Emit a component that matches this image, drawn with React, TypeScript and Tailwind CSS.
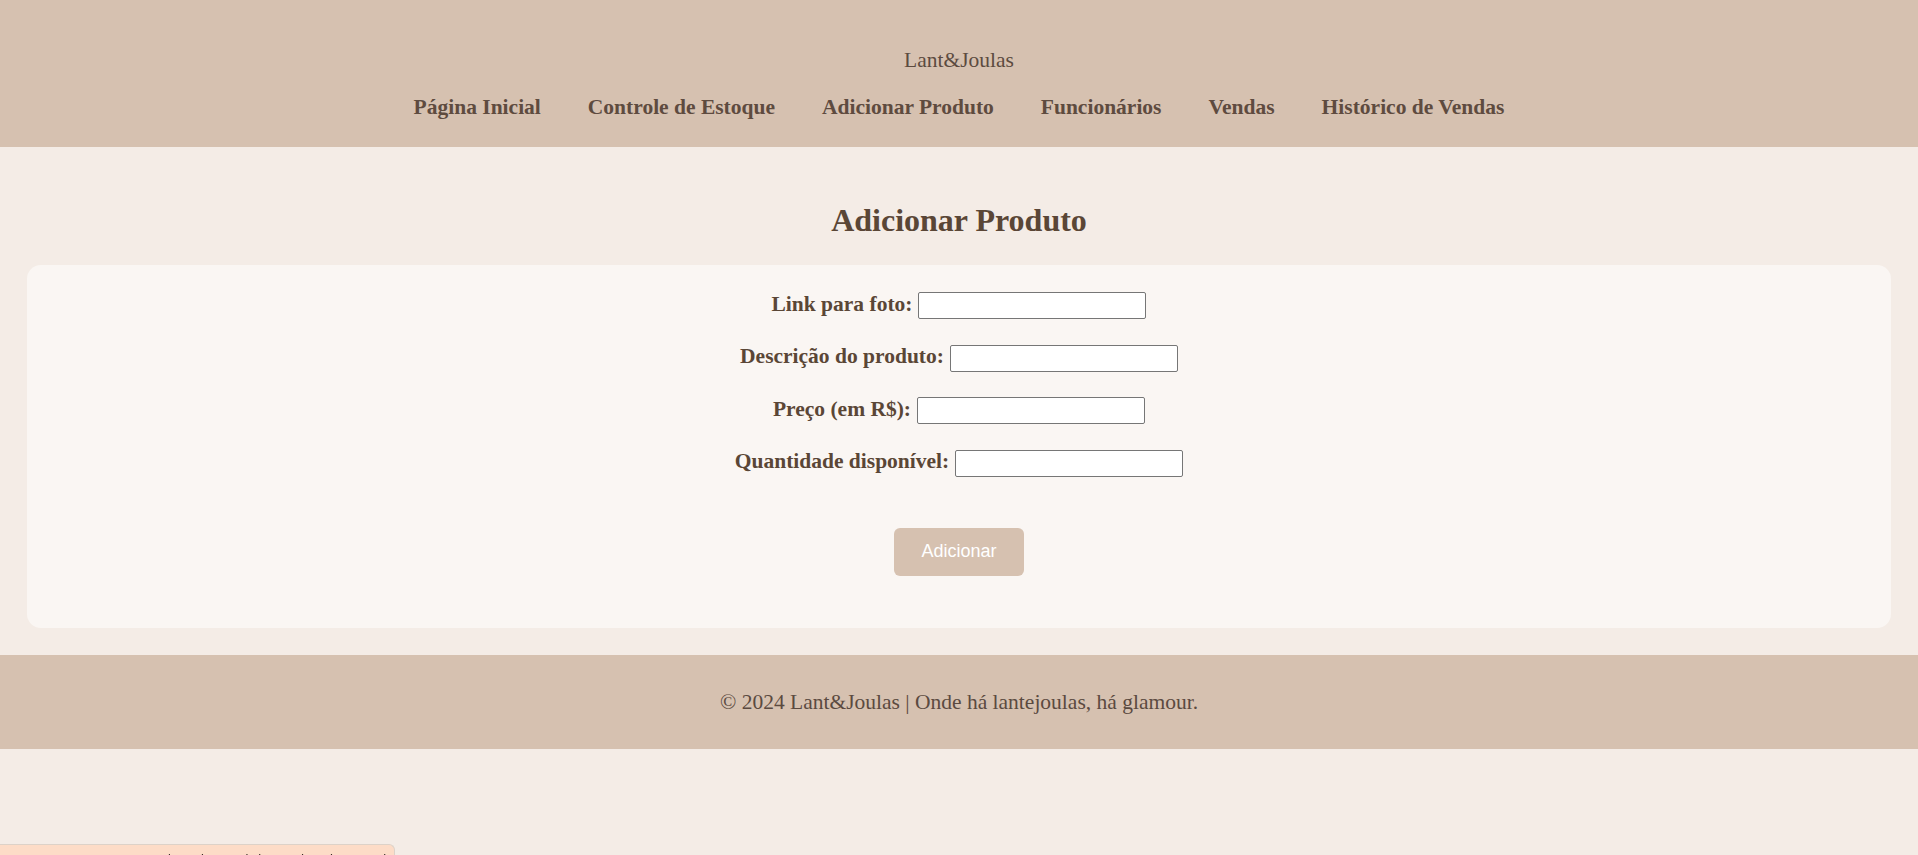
import React from "react";

const navItems = [
  "Página Inicial",
  "Controle de Estoque",
  "Adicionar Produto",
  "Funcionários",
  "Vendas",
  "Histórico de Vendas",
];

const fields = [
  "Link para foto:",
  "Descrição do produto:",
  "Preço (em R$):",
  "Quantidade disponível:",
];

export default function App() {
  return (
    <div className="min-h-[855px] bg-[#f4ece6] font-['Liberation_Serif',serif] text-[#5a4636]">
      <header className="bg-[#d6c1b0] pt-[48px] pb-[27px]">
        <div className="text-center text-[21.5px] leading-[25px] text-[#5c4b40]">Lant&amp;Joulas</div>
        <nav className="mt-[22px] flex justify-center gap-[47px] text-[21.5px] font-bold leading-[25px] text-[#5e4b3f]">
          {navItems.map((n) => (
            <a key={n} href="#" className="whitespace-nowrap">
              {n}
            </a>
          ))}
        </nav>
      </header>

      <main className="px-[27px] pt-[55px] pb-[27px]">
        <h2 className="text-center text-[32px] font-bold leading-[37px] text-[#5a4636]">Adicionar Produto</h2>
        <form
          className="mt-[26px] flex flex-col items-center rounded-[14px] bg-[#faf6f3] pt-[27px] pb-[52px]"
          onSubmit={(e) => e.preventDefault()}
        >
          <div className="flex flex-col items-center gap-[25.67px]">
            {fields.map((f) => (
              <div key={f} className="flex h-[27px] items-center gap-[6px]">
                <label className="-mt-[3px] whitespace-nowrap text-[21.5px] font-bold leading-[25px] text-[#5a4636]">
                  {f}
                </label>
                <input
                  type="text"
                  className="h-[27px] w-[228px] rounded-[2px] border border-[#767676] bg-white"
                />
              </div>
            ))}
          </div>
          <button
            type="submit"
            className="mt-[51px] h-[48px] w-[130px] rounded-[6px] bg-[#d6c1b0] font-['Liberation_Sans',sans-serif] text-[18px] text-white"
          >
            Adicionar
          </button>
        </form>
      </main>

      <footer className="flex h-[94px] items-center justify-center bg-[#d6c1b0] text-[21.5px] text-[#5b4a40]">
        © 2024 Lant&amp;Joulas | Onde há lantejoulas, há glamour.
      </footer>

      <div className="fixed bottom-0 left-0 h-[11px] w-[395px] overflow-hidden rounded-tr-[6px] border-t border-r border-[#ddd2c8] bg-[#fddcc7]">
        <div className="whitespace-nowrap pl-[168px] pt-[7px] font-['Liberation_Sans',sans-serif] text-[13px] leading-[13px] text-[#3a2e28]">
          <span>l</span>
          <span className="ml-[30px]">k</span>
          <span className="ml-[38px]">l</span>
          <span className="ml-[10px]">k</span>
          <span className="ml-[32px]">d</span>
          <span className="ml-[26px]">h</span>
          <span className="ml-[46px]">l</span>
        </div>
      </div>
    </div>
  );
}
